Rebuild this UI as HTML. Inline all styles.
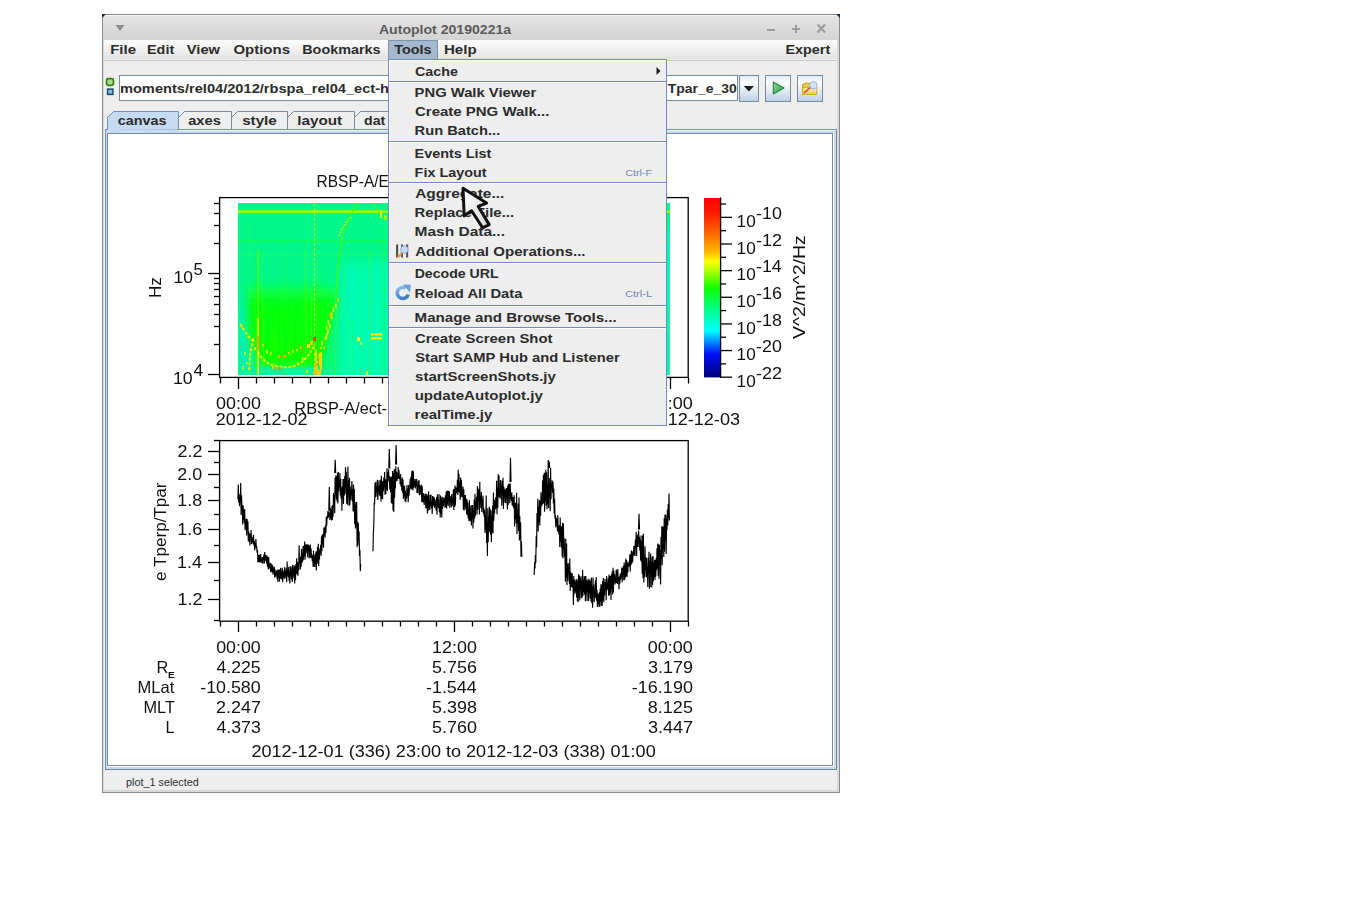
<!DOCTYPE html>
<html><head><meta charset="utf-8"><title>Autoplot 20190221a</title>
<style>
html,body{margin:0;padding:0;background:#ffffff;width:1345px;height:916px;overflow:hidden}
svg{display:block;position:absolute;left:0;top:0}
text{font-family:"Liberation Sans",sans-serif;white-space:pre}
</style></head><body>
<svg width="1345" height="916" viewBox="0 0 1345 916">
<defs>
<linearGradient id="gTitle" x1="0" y1="0" x2="0" y2="1"><stop offset="0" stop-color="#e4e4e4"/><stop offset="1" stop-color="#d3d3d3"/></linearGradient>
<linearGradient id="gMenu" x1="0" y1="0" x2="0" y2="1"><stop offset="0" stop-color="#fdfdfd"/><stop offset="1" stop-color="#e3e3e3"/></linearGradient>
<linearGradient id="gBtn" x1="0" y1="0" x2="0" y2="1"><stop offset="0" stop-color="#dfe9f4"/><stop offset="0.28" stop-color="#ffffff"/><stop offset="1" stop-color="#bccfe4"/></linearGradient>
<linearGradient id="gCbar" x1="0" y1="0" x2="0" y2="1">
<stop offset="0" stop-color="#ff0000"/><stop offset="0.08" stop-color="#ff1800"/><stop offset="0.21" stop-color="#ff7000"/>
<stop offset="0.30" stop-color="#ffb800"/><stop offset="0.355" stop-color="#ffff00"/><stop offset="0.41" stop-color="#a8ff00"/><stop offset="0.50" stop-color="#10ff00"/>
<stop offset="0.62" stop-color="#00ff88"/><stop offset="0.74" stop-color="#00ffff"/><stop offset="0.80" stop-color="#0090ff"/><stop offset="0.87" stop-color="#0010f8"/>
<stop offset="1" stop-color="#000078"/></linearGradient>
<linearGradient id="gCursor" x1="0" y1="0" x2="1" y2="1"><stop offset="0" stop-color="#ffffff"/><stop offset="1" stop-color="#d8d8d8"/></linearGradient>
<clipPath id="cSpec"><rect x="238" y="203" width="432" height="172"/></clipPath>
<clipPath id="cField"><rect x="120" y="76" width="617" height="24"/></clipPath>
<filter id="blur3" x="-50%" y="-50%" width="200%" height="200%"><feGaussianBlur stdDeviation="3"/></filter>
<filter id="blur6" x="-50%" y="-50%" width="200%" height="200%"><feGaussianBlur stdDeviation="6"/></filter>
<filter id="blur1" x="-50%" y="-50%" width="200%" height="200%"><feGaussianBlur stdDeviation="0.6"/></filter>
</defs>

<rect x="102" y="14" width="738" height="779" fill="#8c8c8c" />
<rect x="103" y="15" width="736" height="777" fill="#d9d9d9" />
<rect x="103" y="15" width="736" height="1" fill="#f4f4f4" />
<rect x="103" y="16" width="736" height="24" fill="url(#gTitle)" />
<path d="M102,14 L106,14 L102,18 Z" fill="#1a2a4a"/><path d="M840,14 L836,14 L840,18 Z" fill="#1a2a4a"/>
<text x="378.95" y="34" font-size="13.5" font-weight="bold" fill="#5a5a5a" textLength="132.25" lengthAdjust="spacingAndGlyphs" >Autoplot 20190221a</text>
<path d="M115.5,25 L124.5,25 L120,31 Z" fill="#8e8e8e"/>
<rect x="767" y="29" width="8" height="2" fill="#9c9c9c" />
<rect x="792" y="28" width="8" height="2" fill="#9c9c9c" />
<rect x="795" y="25" width="2" height="8" fill="#9c9c9c" />
<path d="M817.5,24.5 L825,32.5 M825,24.5 L817.5,32.5" stroke="#9c9c9c" stroke-width="2.2"/>
<rect x="104" y="40" width="733" height="19" fill="url(#gMenu)" />
<rect x="104" y="59" width="733" height="1" fill="#eeeeee" />
<rect x="104" y="60" width="733" height="1" fill="#c9c9c9" />
<rect x="104" y="61" width="733" height="729" fill="#eeeeee" />
<text x="110.19" y="54" font-size="12.5" font-weight="bold" fill="#2b2b2b" textLength="25.80" lengthAdjust="spacingAndGlyphs" >File</text>
<text x="147.03" y="54" font-size="12.5" font-weight="bold" fill="#2b2b2b" textLength="27.17" lengthAdjust="spacingAndGlyphs" >Edit</text>
<text x="186.89" y="54" font-size="12.5" font-weight="bold" fill="#2b2b2b" textLength="33.09" lengthAdjust="spacingAndGlyphs" >View</text>
<text x="233.40" y="54" font-size="12.5" font-weight="bold" fill="#2b2b2b" textLength="56.60" lengthAdjust="spacingAndGlyphs" >Options</text>
<text x="302.23" y="54" font-size="12.5" font-weight="bold" fill="#2b2b2b" textLength="78.37" lengthAdjust="spacingAndGlyphs" >Bookmarks</text>
<text x="443.98" y="54" font-size="12.5" font-weight="bold" fill="#2b2b2b" textLength="32.65" lengthAdjust="spacingAndGlyphs" >Help</text>
<rect x="388" y="40" width="50" height="19" fill="#a4b9cf" />
<rect x="388.5" y="40.5" width="49" height="19" fill="none" stroke="#8094ab"/>
<text x="394.16" y="54" font-size="12.5" font-weight="bold" fill="#2b2b2b" textLength="37.46" lengthAdjust="spacingAndGlyphs" >Tools</text>
<text x="785.53" y="54" font-size="12.5" font-weight="bold" fill="#2b2b2b" textLength="44.65" lengthAdjust="spacingAndGlyphs" >Expert</text>
<rect x="106.6" y="78.6" width="6.8" height="6.8" rx="1.6" fill="#a4dd84" stroke="#3d7c0e" stroke-width="1.7"/>
<rect x="107.6" y="89.1" width="5.3" height="5.3" fill="#88b8da" stroke="#14506e" stroke-width="1.5"/>
<rect x="119" y="75" width="619" height="26" fill="#7b8a99" />
<rect x="120" y="76" width="617" height="24" fill="#ffffff" />
<g clip-path="url(#cField)">
<text x="119.95" y="93" font-size="12.5" font-weight="bold" fill="#2b2b2b" textLength="438.14" lengthAdjust="spacingAndGlyphs" >moments/rel04/2012/rbspa_rel04_ect-hope-MOM-L3_Tpar_e_30</text>
</g>
<rect x="580" y="76" width="157" height="24" fill="#ffffff" />
<text x="667.76" y="93" font-size="12.5" font-weight="bold" fill="#2b2b2b" textLength="69.00" lengthAdjust="spacingAndGlyphs" >Tpar_e_30</text>
<rect x="739.5" y="75.5" width="19" height="26" fill="url(#gBtn)" stroke="#7b8a99"/>
<path d="M743.8,86 L754,86 L748.9,91.5 Z" fill="#1e1e1e"/>
<rect x="765.5" y="75.5" width="25" height="26" fill="url(#gBtn)" stroke="#7b8a99"/>
<defs><linearGradient id="gPlay" x1="0" y1="0" x2="1" y2="1"><stop offset="0" stop-color="#8ad89a"/><stop offset="1" stop-color="#2e9e4a"/></linearGradient><linearGradient id="gFold" x1="0" y1="0" x2="0" y2="1"><stop offset="0" stop-color="#fff0a8"/><stop offset="1" stop-color="#f2cc50"/></linearGradient></defs>
<path d="M773.3,82 L784,88 L773.3,94 Z" fill="url(#gPlay)" stroke="#1f8a40" stroke-width="1.1" stroke-linejoin="round"/>
<rect x="797.5" y="75.5" width="25" height="26" fill="url(#gBtn)" stroke="#7b8a99"/>
<path d="M802.5,84.5 L806,83 L809.5,83 L810.5,84.5 L816.5,84.5 L816.5,94.5 L802.5,94.5 Z" fill="#e9c450" stroke="#c9a21e" stroke-width="1"/>
<path d="M803,87.5 L817,87.5 L816.5,94.5 L802.5,94.5 Z" fill="url(#gFold)" stroke="#d0a828" stroke-width="0.8"/>
<path d="M804,93 L810.8,87" stroke="#e8602a" stroke-width="1.7"/>
<circle cx="813.4" cy="85.3" r="3.7" fill="#cce4ff" stroke="#9cb2c8" stroke-width="1"/>
<rect x="105" y="129" width="732" height="641" fill="#6d8ec8" />
<rect x="836" y="129" width="1" height="641" fill="#70849a" />
<rect x="105" y="769" width="732" height="1" fill="#70849a" />
<rect x="106" y="130" width="730" height="639" fill="#c6dbf2" />
<rect x="106" y="130" width="730" height="1" fill="#f4f8fc" />
<rect x="107" y="133" width="727" height="634" fill="#ffffff" />
<rect x="107" y="133" width="726" height="633" fill="#7b8a99" />
<rect x="108" y="134" width="724" height="631" fill="#ffffff" />
<rect x="837" y="129" width="2" height="641" fill="#d9d9d9" />
<path d="M231.5,130 L231.5,117.5 L237.5,111.5 L287.5,111.5 L287.5,129.5" fill="#eeeeee" stroke="#7b8a99" stroke-width="1"/>
<path d="M287.5,130 L287.5,117.5 L293.5,111.5 L354.5,111.5 L354.5,129.5" fill="#eeeeee" stroke="#7b8a99" stroke-width="1"/>
<path d="M354.5,130 L354.5,117.5 L360.5,111.5 L419.5,111.5 L419.5,129.5" fill="#eeeeee" stroke="#7b8a99" stroke-width="1"/>
<path d="M178.5,130 L178.5,117.5 L184.5,111.5 L231.5,111.5 L231.5,129.5" fill="#eeeeee" stroke="#7b8a99" stroke-width="1"/>
<path d="M107.5,130 L107.5,117.5 L113.5,111.5 L178.5,111.5 L178.5,129.5" fill="#c6dbf2" stroke="#6d8ec8" stroke-width="1"/>
<line x1="178" y1="129.5" x2="837" y2="129.5" stroke="#6d8ec8" stroke-width="1" />
<rect x="106" y="130" width="730" height="3" fill="#c6dbf2" />
<rect x="179" y="130" width="657" height="1" fill="#f4f8fc" />
<rect x="107" y="133" width="726" height="1" fill="#7b8a99" />
<text x="117.82" y="125" font-size="12.5" font-weight="bold" fill="#2b2b2b" textLength="48.78" lengthAdjust="spacingAndGlyphs" >canvas</text>
<text x="188.16" y="125" font-size="12.5" font-weight="bold" fill="#2b2b2b" textLength="32.66" lengthAdjust="spacingAndGlyphs" >axes</text>
<text x="242.17" y="125" font-size="12.5" font-weight="bold" fill="#2b2b2b" textLength="34.55" lengthAdjust="spacingAndGlyphs" >style</text>
<text x="297.23" y="125" font-size="12.5" font-weight="bold" fill="#2b2b2b" textLength="44.96" lengthAdjust="spacingAndGlyphs" >layout</text>
<text x="364.13" y="125" font-size="12.5" font-weight="bold" fill="#2b2b2b" textLength="21.19" lengthAdjust="spacingAndGlyphs" >dat</text>
<text x="126.00" y="786" font-size="10.5" font-weight="normal" fill="#2e2e2e" textLength="72.80" lengthAdjust="spacingAndGlyphs" >plot_1 selected</text>
<rect x="104" y="790" width="733" height="1" fill="#d6d6d6" />
<g style="will-change:transform">
<g clip-path="url(#cSpec)">
<rect x="238" y="203" width="432" height="172" fill="#00f88a" />
<g filter="url(#blur6)">
<rect x="340" y="262" width="60" height="120" fill="#00fcbc" opacity="0.8"/>
<rect x="645" y="230" width="40" height="150" fill="#00fcb4"/>
<path d="M232,300 L244,305 L252,375 L232,375 Z" fill="#00f2b4"/>
</g>
<defs><linearGradient id="gBowl" x1="0" y1="0" x2="0" y2="1"><stop offset="0" stop-color="#00ff60" stop-opacity="0"/><stop offset="0.15" stop-color="#10ff30" stop-opacity="0.75"/><stop offset="0.3" stop-color="#00ff10"/><stop offset="1" stop-color="#00ff00"/></linearGradient></defs>
<g filter="url(#blur3)">
<path d="M247,278 L337,278 L336,302 C332,325 326,348 320,364 C305,367 285,367 266,366 C258,358 252,345 249,332 Z" fill="url(#gBowl)"/>
</g>
<rect x="238" y="367" width="76" height="8" fill="#00f4a4" opacity="0.8" filter="url(#blur1)"/>
<line x1="507.1" y1="292" x2="507.1" y2="375" stroke="#20ff30" stroke-width="0.7" opacity="0.54"/>
<line x1="573.2" y1="233" x2="573.2" y2="375" stroke="#20ff30" stroke-width="0.7" opacity="0.57"/>
<line x1="286.9" y1="259" x2="286.9" y2="375" stroke="#40ff20" stroke-width="0.7" opacity="0.38"/>
<line x1="282.1" y1="233" x2="282.1" y2="375" stroke="#40ff20" stroke-width="0.7" opacity="0.39"/>
<line x1="316.7" y1="307" x2="316.7" y2="375" stroke="#60ff10" stroke-width="0.7" opacity="0.31"/>
<line x1="582.4" y1="220" x2="582.4" y2="375" stroke="#60ff10" stroke-width="0.7" opacity="0.29"/>
<line x1="238.8" y1="308" x2="238.8" y2="375" stroke="#40ff20" stroke-width="0.7" opacity="0.52"/>
<line x1="652.8" y1="223" x2="652.8" y2="375" stroke="#40ff20" stroke-width="0.7" opacity="0.35"/>
<line x1="653.4" y1="268" x2="653.4" y2="375" stroke="#40ff20" stroke-width="0.7" opacity="0.31"/>
<line x1="656.4" y1="227" x2="656.4" y2="375" stroke="#60ff10" stroke-width="0.7" opacity="0.35"/>
<line x1="394.0" y1="223" x2="394.0" y2="375" stroke="#40ff20" stroke-width="0.7" opacity="0.34"/>
<line x1="381.4" y1="301" x2="381.4" y2="375" stroke="#20ff30" stroke-width="0.7" opacity="0.46"/>
<line x1="543.7" y1="211" x2="543.7" y2="375" stroke="#00ff50" stroke-width="0.7" opacity="0.54"/>
<line x1="445.7" y1="241" x2="445.7" y2="375" stroke="#60ff10" stroke-width="0.7" opacity="0.42"/>
<line x1="314.1" y1="234" x2="314.1" y2="375" stroke="#20ff30" stroke-width="0.7" opacity="0.58"/>
<line x1="392.5" y1="252" x2="392.5" y2="375" stroke="#60ff10" stroke-width="0.7" opacity="0.38"/>
<line x1="487.9" y1="204" x2="487.9" y2="375" stroke="#20ff30" stroke-width="0.7" opacity="0.50"/>
<line x1="507.4" y1="318" x2="507.4" y2="375" stroke="#20ff30" stroke-width="0.7" opacity="0.51"/>
<line x1="639.6" y1="316" x2="639.6" y2="375" stroke="#00ff50" stroke-width="0.7" opacity="0.43"/>
<line x1="623.7" y1="233" x2="623.7" y2="375" stroke="#60ff10" stroke-width="0.7" opacity="0.29"/>
<line x1="561.3" y1="299" x2="561.3" y2="375" stroke="#00ff50" stroke-width="0.7" opacity="0.26"/>
<line x1="646.6" y1="214" x2="646.6" y2="375" stroke="#00ff50" stroke-width="0.7" opacity="0.43"/>
<line x1="394.7" y1="221" x2="394.7" y2="375" stroke="#00ff50" stroke-width="0.7" opacity="0.57"/>
<line x1="473.5" y1="240" x2="473.5" y2="375" stroke="#00ff50" stroke-width="0.7" opacity="0.36"/>
<line x1="583.1" y1="278" x2="583.1" y2="375" stroke="#00ff50" stroke-width="0.7" opacity="0.60"/>
<line x1="307.8" y1="209" x2="307.8" y2="375" stroke="#60ff10" stroke-width="0.7" opacity="0.26"/>
<line x1="557.9" y1="244" x2="557.9" y2="375" stroke="#00ff50" stroke-width="0.7" opacity="0.41"/>
<line x1="420.2" y1="210" x2="420.2" y2="375" stroke="#20ff30" stroke-width="0.7" opacity="0.53"/>
<line x1="382.4" y1="228" x2="382.4" y2="375" stroke="#40ff20" stroke-width="0.7" opacity="0.47"/>
<line x1="578.4" y1="216" x2="578.4" y2="375" stroke="#60ff10" stroke-width="0.7" opacity="0.38"/>
<line x1="263.4" y1="253" x2="263.4" y2="375" stroke="#40ff20" stroke-width="0.7" opacity="0.41"/>
<line x1="669.7" y1="305" x2="669.7" y2="375" stroke="#60ff10" stroke-width="0.7" opacity="0.59"/>
<line x1="535.6" y1="241" x2="535.6" y2="375" stroke="#00ff50" stroke-width="0.7" opacity="0.35"/>
<line x1="412.4" y1="221" x2="412.4" y2="375" stroke="#60ff10" stroke-width="0.7" opacity="0.54"/>
<line x1="467.7" y1="225" x2="467.7" y2="375" stroke="#60ff10" stroke-width="0.7" opacity="0.55"/>
<line x1="315.8" y1="262" x2="315.8" y2="375" stroke="#00ff50" stroke-width="0.7" opacity="0.27"/>
<line x1="581.5" y1="246" x2="581.5" y2="375" stroke="#20ff30" stroke-width="0.7" opacity="0.52"/>
<line x1="395.0" y1="288" x2="395.0" y2="375" stroke="#00ff50" stroke-width="0.7" opacity="0.54"/>
<line x1="352.4" y1="321" x2="352.4" y2="375" stroke="#00ff50" stroke-width="0.7" opacity="0.58"/>
<line x1="384.9" y1="224" x2="384.9" y2="375" stroke="#20ff30" stroke-width="0.7" opacity="0.42"/>
<line x1="572.2" y1="242" x2="572.2" y2="375" stroke="#00ff50" stroke-width="0.7" opacity="0.41"/>
<line x1="590.8" y1="281" x2="590.8" y2="375" stroke="#00ff50" stroke-width="0.7" opacity="0.37"/>
<line x1="516.2" y1="292" x2="516.2" y2="375" stroke="#60ff10" stroke-width="0.7" opacity="0.37"/>
<line x1="602.1" y1="307" x2="602.1" y2="375" stroke="#60ff10" stroke-width="0.7" opacity="0.59"/>
<line x1="651.2" y1="265" x2="651.2" y2="375" stroke="#40ff20" stroke-width="0.7" opacity="0.32"/>
<line x1="394.4" y1="305" x2="394.4" y2="375" stroke="#00ff50" stroke-width="0.7" opacity="0.49"/>
<line x1="548.9" y1="291" x2="548.9" y2="375" stroke="#40ff20" stroke-width="0.7" opacity="0.47"/>
<line x1="642.4" y1="265" x2="642.4" y2="375" stroke="#60ff10" stroke-width="0.7" opacity="0.36"/>
<line x1="477.0" y1="307" x2="477.0" y2="375" stroke="#00ff50" stroke-width="0.7" opacity="0.50"/>
<line x1="249.9" y1="222" x2="249.9" y2="375" stroke="#60ff10" stroke-width="0.7" opacity="0.47"/>
<line x1="316.1" y1="294" x2="316.1" y2="375" stroke="#40ff20" stroke-width="0.7" opacity="0.47"/>
<line x1="256.1" y1="260" x2="256.1" y2="375" stroke="#40ff20" stroke-width="0.7" opacity="0.31"/>
<line x1="623.3" y1="216" x2="623.3" y2="375" stroke="#40ff20" stroke-width="0.7" opacity="0.42"/>
<line x1="474.9" y1="253" x2="474.9" y2="375" stroke="#00ff50" stroke-width="0.7" opacity="0.38"/>
<line x1="502.3" y1="274" x2="502.3" y2="375" stroke="#40ff20" stroke-width="0.7" opacity="0.50"/>
<line x1="399.6" y1="245" x2="399.6" y2="375" stroke="#00ff50" stroke-width="0.7" opacity="0.55"/>
<line x1="612.3" y1="286" x2="612.3" y2="375" stroke="#00ff50" stroke-width="0.7" opacity="0.59"/>
<line x1="475.6" y1="239" x2="475.6" y2="375" stroke="#00ff50" stroke-width="0.7" opacity="0.44"/>
<line x1="384.6" y1="273" x2="384.6" y2="375" stroke="#00ff50" stroke-width="0.7" opacity="0.54"/>
<line x1="419.1" y1="301" x2="419.1" y2="375" stroke="#00ff50" stroke-width="0.7" opacity="0.41"/>
<line x1="305.7" y1="249" x2="305.7" y2="375" stroke="#60ff10" stroke-width="0.7" opacity="0.59"/>
<line x1="656.2" y1="276" x2="656.2" y2="375" stroke="#00ff50" stroke-width="0.7" opacity="0.54"/>
<line x1="523.8" y1="249" x2="523.8" y2="375" stroke="#00ff50" stroke-width="0.7" opacity="0.45"/>
<line x1="503.8" y1="220" x2="503.8" y2="375" stroke="#60ff10" stroke-width="0.7" opacity="0.40"/>
<line x1="659.9" y1="262" x2="659.9" y2="375" stroke="#60ff10" stroke-width="0.7" opacity="0.59"/>
<line x1="402.1" y1="318" x2="402.1" y2="375" stroke="#40ff20" stroke-width="0.7" opacity="0.46"/>
<line x1="350.2" y1="321" x2="350.2" y2="375" stroke="#60ff10" stroke-width="0.7" opacity="0.34"/>
<line x1="246.5" y1="316" x2="246.5" y2="375" stroke="#00ff50" stroke-width="0.7" opacity="0.42"/>
<line x1="361.7" y1="260" x2="361.7" y2="375" stroke="#20ff30" stroke-width="0.7" opacity="0.48"/>
<line x1="653.1" y1="232" x2="653.1" y2="375" stroke="#20ff30" stroke-width="0.7" opacity="0.52"/>
<line x1="318.1" y1="281" x2="318.1" y2="368" stroke="#30ff00" stroke-width="0.8" opacity="0.51"/>
<line x1="273.9" y1="336" x2="273.9" y2="368" stroke="#30ff00" stroke-width="0.8" opacity="0.61"/>
<line x1="271.7" y1="296" x2="271.7" y2="368" stroke="#30ff00" stroke-width="0.8" opacity="0.36"/>
<line x1="331.1" y1="298" x2="331.1" y2="368" stroke="#30ff00" stroke-width="0.8" opacity="0.54"/>
<line x1="290.0" y1="319" x2="290.0" y2="368" stroke="#30ff00" stroke-width="0.8" opacity="0.54"/>
<line x1="311.5" y1="287" x2="311.5" y2="368" stroke="#30ff00" stroke-width="0.8" opacity="0.60"/>
<line x1="276.1" y1="312" x2="276.1" y2="368" stroke="#30ff00" stroke-width="0.8" opacity="0.43"/>
<line x1="275.7" y1="312" x2="275.7" y2="368" stroke="#30ff00" stroke-width="0.8" opacity="0.49"/>
<line x1="280.9" y1="325" x2="280.9" y2="368" stroke="#30ff00" stroke-width="0.8" opacity="0.54"/>
<line x1="254.9" y1="295" x2="254.9" y2="368" stroke="#30ff00" stroke-width="0.8" opacity="0.48"/>
<line x1="325.3" y1="333" x2="325.3" y2="368" stroke="#30ff00" stroke-width="0.8" opacity="0.52"/>
<line x1="253.2" y1="327" x2="253.2" y2="368" stroke="#30ff00" stroke-width="0.8" opacity="0.47"/>
<line x1="298.1" y1="322" x2="298.1" y2="368" stroke="#30ff00" stroke-width="0.8" opacity="0.55"/>
<line x1="290.6" y1="335" x2="290.6" y2="368" stroke="#30ff00" stroke-width="0.8" opacity="0.45"/>
<line x1="283.3" y1="331" x2="283.3" y2="368" stroke="#30ff00" stroke-width="0.8" opacity="0.38"/>
<line x1="275.7" y1="330" x2="275.7" y2="368" stroke="#30ff00" stroke-width="0.8" opacity="0.33"/>
<line x1="318.9" y1="322" x2="318.9" y2="368" stroke="#30ff00" stroke-width="0.8" opacity="0.47"/>
<line x1="274.9" y1="327" x2="274.9" y2="368" stroke="#30ff00" stroke-width="0.8" opacity="0.66"/>
<line x1="263.4" y1="309" x2="263.4" y2="368" stroke="#30ff00" stroke-width="0.8" opacity="0.52"/>
<line x1="291.8" y1="300" x2="291.8" y2="368" stroke="#30ff00" stroke-width="0.8" opacity="0.36"/>
<line x1="298.9" y1="329" x2="298.9" y2="368" stroke="#30ff00" stroke-width="0.8" opacity="0.33"/>
<line x1="270.4" y1="329" x2="270.4" y2="368" stroke="#30ff00" stroke-width="0.8" opacity="0.62"/>
<line x1="305.1" y1="282" x2="305.1" y2="368" stroke="#30ff00" stroke-width="0.8" opacity="0.59"/>
<line x1="330.3" y1="340" x2="330.3" y2="368" stroke="#30ff00" stroke-width="0.8" opacity="0.58"/>
<line x1="255.9" y1="331" x2="255.9" y2="368" stroke="#30ff00" stroke-width="0.8" opacity="0.39"/>
<line x1="303.7" y1="337" x2="303.7" y2="368" stroke="#30ff00" stroke-width="0.8" opacity="0.58"/>
<line x1="262.8" y1="298" x2="262.8" y2="368" stroke="#30ff00" stroke-width="0.8" opacity="0.67"/>
<line x1="264.0" y1="317" x2="264.0" y2="368" stroke="#30ff00" stroke-width="0.8" opacity="0.47"/>
<line x1="264.9" y1="317" x2="264.9" y2="368" stroke="#30ff00" stroke-width="0.8" opacity="0.32"/>
<line x1="260.7" y1="303" x2="260.7" y2="368" stroke="#30ff00" stroke-width="0.8" opacity="0.33"/>
<line x1="256.6" y1="315" x2="256.6" y2="368" stroke="#30ff00" stroke-width="0.8" opacity="0.60"/>
<line x1="322.3" y1="288" x2="322.3" y2="368" stroke="#30ff00" stroke-width="0.8" opacity="0.47"/>
<line x1="277.2" y1="316" x2="277.2" y2="368" stroke="#30ff00" stroke-width="0.8" opacity="0.50"/>
<line x1="327.1" y1="302" x2="327.1" y2="368" stroke="#30ff00" stroke-width="0.8" opacity="0.32"/>
<line x1="307.8" y1="289" x2="307.8" y2="368" stroke="#30ff00" stroke-width="0.8" opacity="0.55"/>
<line x1="292.5" y1="335" x2="292.5" y2="368" stroke="#30ff00" stroke-width="0.8" opacity="0.52"/>
<line x1="301.7" y1="296" x2="301.7" y2="368" stroke="#30ff00" stroke-width="0.8" opacity="0.52"/>
<line x1="272.3" y1="325" x2="272.3" y2="368" stroke="#30ff00" stroke-width="0.8" opacity="0.51"/>
<line x1="262.7" y1="294" x2="262.7" y2="368" stroke="#30ff00" stroke-width="0.8" opacity="0.45"/>
<line x1="310.9" y1="291" x2="310.9" y2="368" stroke="#30ff00" stroke-width="0.8" opacity="0.59"/>
<rect x="238" y="210.3" width="432" height="2.6" fill="#a0ff00" />
<rect x="238" y="240.6" width="432" height="1.5" fill="#18ff40" opacity="0.8"/>
<rect x="238" y="254" width="432" height="1.2" fill="#30ff60" opacity="0.5"/>
<line x1="258.2" y1="250" x2="258.2" y2="375" stroke="#50ff00" stroke-width="1.3"/>
<line x1="258.2" y1="318" x2="258.2" y2="375" stroke="#f0f000" stroke-width="1.6"/>
<line x1="258.2" y1="336" x2="258.2" y2="350" stroke="#ffa000" stroke-width="2"/>
<line x1="314.6" y1="203" x2="314.6" y2="375" stroke="#c0ff00" stroke-width="0.9" stroke-dasharray="3,2"/>
<line x1="336.5" y1="300" x2="335.5" y2="375" stroke="#40ff20" stroke-width="0.9"/>
<line x1="370" y1="250" x2="370" y2="375" stroke="#40ff30" stroke-width="0.9" opacity="0.7"/>
<path d="M336,300 C338,262 340,240 346,226 C350,216 354,208 357,203" fill="none" stroke="#40ff00" stroke-width="1.2"/>
<path d="M339,236 C342,228 346,222 352,216" fill="none" stroke="#b0ff00" stroke-width="2" stroke-dasharray="1.5,1.5"/>
<path d="M373,203 C376,208 379,213 383,219" fill="none" stroke="#50ff00" stroke-width="1"/>
<rect x="380" y="213" width="2" height="5" fill="#e0ff00" />
<rect x="384" y="215" width="3" height="5" fill="#a0ff00" />
<path d="M240,324 L248,336 L253,341 L250,356 L249,372" fill="none" stroke="#e0f000" stroke-width="2.2" stroke-dasharray="3,1.8"/>
<path d="M258,352 C262,360 268,365 280,367 C290,368 298,366 304,360 C308,356 311,352 314,346" fill="none" stroke="#e8f000" stroke-width="2.2" stroke-dasharray="3,1.5"/>
<rect x="266" y="350" width="1.5" height="3.3" fill="#f0f000"/>
<rect x="270" y="352" width="1.5" height="3.1" fill="#f0f000"/>
<rect x="288" y="352" width="1.5" height="2.2" fill="#f0f000"/>
<rect x="292" y="350" width="1.5" height="3.0" fill="#ffd000"/>
<rect x="296" y="349" width="1.5" height="2.5" fill="#ffd000"/>
<rect x="300" y="346" width="1.5" height="3.0" fill="#ffd000"/>
<rect x="262" y="344" width="1.5" height="2.2" fill="#d8ff00"/>
<rect x="246" y="362" width="1.5" height="2.1" fill="#d8ff00"/>
<rect x="244" y="352" width="1.5" height="2.8" fill="#f0f000"/>
<rect x="242" y="366" width="1.5" height="3.9" fill="#ffd000"/>
<rect x="302" y="357" width="1.5" height="3.4" fill="#f0f000"/>
<rect x="297" y="362" width="1.5" height="3.5" fill="#f0f000"/>
<rect x="314.4" y="375.7" width="1.6" height="2.4" fill="#ffe000"/>
<rect x="313.6" y="371.4" width="1.6" height="2.9" fill="#ffe000"/>
<rect x="316.1" y="369.8" width="1.6" height="3.1" fill="#ffc000"/>
<rect x="316.0" y="365.4" width="1.6" height="4.4" fill="#d8ff00"/>
<rect x="315.5" y="364.4" width="1.6" height="3.8" fill="#f0f000"/>
<rect x="317.2" y="361.0" width="1.6" height="2.2" fill="#ffc000"/>
<rect x="315.4" y="355.7" width="1.6" height="2.1" fill="#ffe000"/>
<rect x="320.7" y="353.9" width="1.6" height="2.0" fill="#d8ff00"/>
<rect x="319.5" y="352.6" width="1.6" height="3.0" fill="#ffc000"/>
<rect x="320.4" y="346.8" width="1.6" height="2.2" fill="#ffe000"/>
<rect x="323.4" y="346.5" width="1.6" height="2.5" fill="#ffc000"/>
<rect x="321.3" y="341.1" width="1.6" height="4.3" fill="#ffe000"/>
<rect x="324.4" y="337.1" width="1.6" height="3.0" fill="#f0f000"/>
<rect x="325.7" y="335.3" width="1.6" height="4.1" fill="#f0f000"/>
<rect x="326.3" y="332.9" width="1.6" height="2.4" fill="#ffe000"/>
<rect x="327.2" y="329.2" width="1.6" height="4.2" fill="#ffe000"/>
<rect x="325.7" y="325.8" width="1.6" height="3.7" fill="#f0f000"/>
<rect x="329.1" y="324.5" width="1.6" height="4.0" fill="#d8ff00"/>
<rect x="327.7" y="320.4" width="1.6" height="4.2" fill="#f0f000"/>
<rect x="331.3" y="316.7" width="1.6" height="2.5" fill="#ffe000"/>
<rect x="329.7" y="313.2" width="1.6" height="4.2" fill="#ffc000"/>
<rect x="331.0" y="311.8" width="1.6" height="4.3" fill="#ffc000"/>
<rect x="332.7" y="307.2" width="1.6" height="4.8" fill="#d8ff00"/>
<rect x="335.2" y="304.9" width="1.6" height="2.3" fill="#ffc000"/>
<rect x="334.9" y="303.7" width="1.6" height="3.5" fill="#f0f000"/>
<rect x="337.4" y="298.2" width="1.6" height="3.3" fill="#ffc000"/>
<rect x="319.1" y="371.9" width="1.5" height="7.8" fill="#ffd800"/>
<rect x="315.6" y="367.4" width="1.5" height="6.2" fill="#ffd800"/>
<rect x="315.5" y="355.8" width="1.5" height="7.6" fill="#ffd800"/>
<rect x="320.3" y="352.2" width="1.5" height="7.9" fill="#ffd800"/>
<rect x="315.3" y="351.9" width="1.5" height="6.7" fill="#ffd800"/>
<rect x="319.0" y="361.0" width="1.5" height="4.8" fill="#ffd800"/>
<rect x="317.4" y="369.2" width="1.5" height="5.6" fill="#ffd800"/>
<rect x="315.1" y="350.3" width="1.5" height="6.8" fill="#ffd800"/>
<rect x="319.5" y="372.3" width="1.5" height="8.0" fill="#ffd800"/>
<rect x="318.4" y="353.5" width="1.5" height="5.4" fill="#ffd800"/>
<rect x="320.2" y="356.6" width="1.5" height="5.0" fill="#ffd800"/>
<rect x="315.1" y="363.4" width="1.5" height="5.4" fill="#ffd800"/>
<rect x="319.6" y="370.0" width="1.5" height="7.8" fill="#ffd800"/>
<rect x="319.3" y="356.9" width="1.5" height="5.5" fill="#ffd800"/>
<rect x="241" y="324" width="1.5" height="4" fill="#ffd000" />
<rect x="252" y="338" width="2" height="4" fill="#f0f000" />
<rect x="254" y="347" width="2" height="3" fill="#e0f000" />
<rect x="278" y="355" width="2" height="3" fill="#ffb000" />
<rect x="281" y="355" width="2" height="3" fill="#ff9000" />
<rect x="284" y="355" width="2" height="3" fill="#ffb000" />
<rect x="275" y="367" width="2" height="3" fill="#ff9000" />
<rect x="279" y="367" width="2" height="3" fill="#ff8000" />
<rect x="272" y="366" width="1.5" height="3" fill="#ffd000" />
<rect x="313.5" y="337" width="2.5" height="4" fill="#ff3000" />
<rect x="310" y="341" width="3" height="4" fill="#ffd000" />
<rect x="307" y="344" width="3" height="4" fill="#ffe000" />
<rect x="301" y="347" width="1.5" height="3" fill="#ff9000" />
<rect x="371" y="333" width="11" height="2.5" fill="#ffe800" />
<rect x="371" y="337" width="11" height="2.5" fill="#f0ff00" />
<rect x="357" y="337" width="3" height="4" fill="#e8ff00" />
<rect x="360" y="342" width="2" height="3" fill="#d0ff00" />
<rect x="314" y="363" width="3" height="12" fill="#ffc000" />
<rect x="320" y="360" width="2" height="10" fill="#ffd000" />
<rect x="366" y="371" width="2" height="4" fill="#e0ff00" />
<rect x="306" y="370" width="2" height="3" fill="#c0ff00" />
</g>
<rect x="219.6" y="197.6" width="468.6" height="179.8" fill="none" stroke="#000" stroke-width="1.3"/>
<line x1="220.5" y1="378" x2="220.5" y2="383.5" stroke="#000" stroke-width="1.3" />
<line x1="238.5" y1="378" x2="238.5" y2="389" stroke="#000" stroke-width="1.3" />
<line x1="256.5" y1="378" x2="256.5" y2="383.5" stroke="#000" stroke-width="1.3" />
<line x1="274.5" y1="378" x2="274.5" y2="383.5" stroke="#000" stroke-width="1.3" />
<line x1="292.5" y1="378" x2="292.5" y2="383.5" stroke="#000" stroke-width="1.3" />
<line x1="310.5" y1="378" x2="310.5" y2="383.5" stroke="#000" stroke-width="1.3" />
<line x1="328.5" y1="378" x2="328.5" y2="383.5" stroke="#000" stroke-width="1.3" />
<line x1="346.5" y1="378" x2="346.5" y2="383.5" stroke="#000" stroke-width="1.3" />
<line x1="364.5" y1="378" x2="364.5" y2="383.5" stroke="#000" stroke-width="1.3" />
<line x1="382.5" y1="378" x2="382.5" y2="383.5" stroke="#000" stroke-width="1.3" />
<line x1="400.5" y1="378" x2="400.5" y2="383.5" stroke="#000" stroke-width="1.3" />
<line x1="418.5" y1="378" x2="418.5" y2="383.5" stroke="#000" stroke-width="1.3" />
<line x1="436.5" y1="378" x2="436.5" y2="383.5" stroke="#000" stroke-width="1.3" />
<line x1="454.5" y1="378" x2="454.5" y2="389" stroke="#000" stroke-width="1.3" />
<line x1="472.5" y1="378" x2="472.5" y2="383.5" stroke="#000" stroke-width="1.3" />
<line x1="490.5" y1="378" x2="490.5" y2="383.5" stroke="#000" stroke-width="1.3" />
<line x1="508.5" y1="378" x2="508.5" y2="383.5" stroke="#000" stroke-width="1.3" />
<line x1="526.5" y1="378" x2="526.5" y2="383.5" stroke="#000" stroke-width="1.3" />
<line x1="544.5" y1="378" x2="544.5" y2="383.5" stroke="#000" stroke-width="1.3" />
<line x1="562.5" y1="378" x2="562.5" y2="383.5" stroke="#000" stroke-width="1.3" />
<line x1="580.5" y1="378" x2="580.5" y2="383.5" stroke="#000" stroke-width="1.3" />
<line x1="598.5" y1="378" x2="598.5" y2="383.5" stroke="#000" stroke-width="1.3" />
<line x1="616.5" y1="378" x2="616.5" y2="383.5" stroke="#000" stroke-width="1.3" />
<line x1="634.5" y1="378" x2="634.5" y2="383.5" stroke="#000" stroke-width="1.3" />
<line x1="652.5" y1="378" x2="652.5" y2="383.5" stroke="#000" stroke-width="1.3" />
<line x1="670.5" y1="378" x2="670.5" y2="389" stroke="#000" stroke-width="1.3" />
<line x1="688.5" y1="378" x2="688.5" y2="383.5" stroke="#000" stroke-width="1.3" />
<line x1="208" y1="374.5" x2="219.6" y2="374.5" stroke="#000" stroke-width="1.3" />
<line x1="214" y1="344.5" x2="219.6" y2="344.5" stroke="#000" stroke-width="1.3" />
<line x1="214" y1="326.5" x2="219.6" y2="326.5" stroke="#000" stroke-width="1.3" />
<line x1="214" y1="314.5" x2="219.6" y2="314.5" stroke="#000" stroke-width="1.3" />
<line x1="214" y1="304.5" x2="219.6" y2="304.5" stroke="#000" stroke-width="1.3" />
<line x1="214" y1="296.5" x2="219.6" y2="296.5" stroke="#000" stroke-width="1.3" />
<line x1="214" y1="289.5" x2="219.6" y2="289.5" stroke="#000" stroke-width="1.3" />
<line x1="214" y1="283.5" x2="219.6" y2="283.5" stroke="#000" stroke-width="1.3" />
<line x1="214" y1="278.5" x2="219.6" y2="278.5" stroke="#000" stroke-width="1.3" />
<line x1="208" y1="273.5" x2="219.6" y2="273.5" stroke="#000" stroke-width="1.3" />
<line x1="214" y1="243.5" x2="219.6" y2="243.5" stroke="#000" stroke-width="1.3" />
<line x1="214" y1="225.5" x2="219.6" y2="225.5" stroke="#000" stroke-width="1.3" />
<line x1="214" y1="213.5" x2="219.6" y2="213.5" stroke="#000" stroke-width="1.3" />
<line x1="214" y1="203.5" x2="219.6" y2="203.5" stroke="#000" stroke-width="1.3" />
<text x="172.97" y="384" font-size="16.5" font-weight="normal" fill="#111111" textLength="19.74" lengthAdjust="spacingAndGlyphs" >10</text>
<text x="193.61" y="376" font-size="16.5" font-weight="normal" fill="#111111" textLength="9.69" lengthAdjust="spacingAndGlyphs" >4</text>
<text x="173.49" y="283" font-size="16.5" font-weight="normal" fill="#111111" textLength="19.40" lengthAdjust="spacingAndGlyphs" >10</text>
<text x="193.53" y="275" font-size="16.5" font-weight="normal" fill="#111111" textLength="9.37" lengthAdjust="spacingAndGlyphs" >5</text>
<text transform="rotate(-90)" x="-297.90" y="161" font-size="16.5" font-weight="normal" fill="#111" textLength="20.74" lengthAdjust="spacingAndGlyphs">Hz</text>
<text x="316.52" y="187" font-size="16.5" font-weight="normal" fill="#111111" textLength="124.10" lengthAdjust="spacingAndGlyphs" >RBSP-A/EMFISIS</text>
<text x="215.98" y="409" font-size="16.5" font-weight="normal" fill="#111111" textLength="44.89" lengthAdjust="spacingAndGlyphs" >00:00</text>
<text x="215.70" y="425" font-size="16.5" font-weight="normal" fill="#111111" textLength="91.90" lengthAdjust="spacingAndGlyphs" >2012-12-02</text>
<text x="647.88" y="409" font-size="16.5" font-weight="normal" fill="#111111" textLength="44.99" lengthAdjust="spacingAndGlyphs" >00:00</text>
<text x="647.60" y="425" font-size="16.5" font-weight="normal" fill="#111111" textLength="92.38" lengthAdjust="spacingAndGlyphs" >2012-12-03</text>
<text x="294.35" y="414" font-size="16.5" font-weight="normal" fill="#111111" textLength="128.93" lengthAdjust="spacingAndGlyphs" >RBSP-A/ect-hope</text>
<rect x="704" y="198" width="16.4" height="179.4" fill="url(#gCbar)" />
<line x1="720.6" y1="197.5" x2="720.6" y2="378" stroke="#000" stroke-width="1.3" />
<line x1="720.6" y1="377.2" x2="732" y2="377.2" stroke="#000" stroke-width="1.3" />
<line x1="720.6" y1="363.88" x2="726" y2="363.88" stroke="#000" stroke-width="1.3" />
<line x1="720.6" y1="350.56" x2="732" y2="350.56" stroke="#000" stroke-width="1.3" />
<line x1="720.6" y1="337.24" x2="726" y2="337.24" stroke="#000" stroke-width="1.3" />
<line x1="720.6" y1="323.91999999999996" x2="732" y2="323.91999999999996" stroke="#000" stroke-width="1.3" />
<line x1="720.6" y1="310.6" x2="726" y2="310.6" stroke="#000" stroke-width="1.3" />
<line x1="720.6" y1="297.28" x2="732" y2="297.28" stroke="#000" stroke-width="1.3" />
<line x1="720.6" y1="283.96" x2="726" y2="283.96" stroke="#000" stroke-width="1.3" />
<line x1="720.6" y1="270.64" x2="732" y2="270.64" stroke="#000" stroke-width="1.3" />
<line x1="720.6" y1="257.32" x2="726" y2="257.32" stroke="#000" stroke-width="1.3" />
<line x1="720.6" y1="244.0" x2="732" y2="244.0" stroke="#000" stroke-width="1.3" />
<line x1="720.6" y1="230.67999999999998" x2="726" y2="230.67999999999998" stroke="#000" stroke-width="1.3" />
<line x1="720.6" y1="217.35999999999999" x2="732" y2="217.35999999999999" stroke="#000" stroke-width="1.3" />
<line x1="720.6" y1="204.04" x2="726" y2="204.04" stroke="#000" stroke-width="1.3" />
<text x="736.61" y="387" font-size="16.5" font-weight="normal" fill="#111111" textLength="19.07" lengthAdjust="spacingAndGlyphs" >10</text>
<text x="756.09" y="379" font-size="16.5" font-weight="normal" fill="#111111" textLength="26.02" lengthAdjust="spacingAndGlyphs" >-22</text>
<text x="736.61" y="360" font-size="16.5" font-weight="normal" fill="#111111" textLength="19.07" lengthAdjust="spacingAndGlyphs" >10</text>
<text x="756.10" y="352" font-size="16.5" font-weight="normal" fill="#111111" textLength="25.78" lengthAdjust="spacingAndGlyphs" >-20</text>
<text x="736.61" y="334" font-size="16.5" font-weight="normal" fill="#111111" textLength="19.07" lengthAdjust="spacingAndGlyphs" >10</text>
<text x="756.09" y="326" font-size="16.5" font-weight="normal" fill="#111111" textLength="25.87" lengthAdjust="spacingAndGlyphs" >-18</text>
<text x="736.61" y="307" font-size="16.5" font-weight="normal" fill="#111111" textLength="19.07" lengthAdjust="spacingAndGlyphs" >10</text>
<text x="756.09" y="299" font-size="16.5" font-weight="normal" fill="#111111" textLength="25.87" lengthAdjust="spacingAndGlyphs" >-16</text>
<text x="736.61" y="280" font-size="16.5" font-weight="normal" fill="#111111" textLength="19.07" lengthAdjust="spacingAndGlyphs" >10</text>
<text x="756.10" y="272" font-size="16.5" font-weight="normal" fill="#111111" textLength="25.59" lengthAdjust="spacingAndGlyphs" >-14</text>
<text x="736.61" y="254" font-size="16.5" font-weight="normal" fill="#111111" textLength="19.07" lengthAdjust="spacingAndGlyphs" >10</text>
<text x="756.09" y="246" font-size="16.5" font-weight="normal" fill="#111111" textLength="26.02" lengthAdjust="spacingAndGlyphs" >-12</text>
<text x="736.61" y="227" font-size="16.5" font-weight="normal" fill="#111111" textLength="19.07" lengthAdjust="spacingAndGlyphs" >10</text>
<text x="756.10" y="219" font-size="16.5" font-weight="normal" fill="#111111" textLength="25.78" lengthAdjust="spacingAndGlyphs" >-10</text>
<text transform="rotate(-90)" x="-339.10" y="805" font-size="16.5" font-weight="normal" fill="#111" textLength="103.95" lengthAdjust="spacingAndGlyphs">V^2/m^2/Hz</text>
<rect x="219.6" y="440.6" width="468.6" height="180.6" fill="none" stroke="#000" stroke-width="1.3"/>
<line x1="214" y1="620.5" x2="219.6" y2="620.5" stroke="#000" stroke-width="1.3" />
<line x1="208" y1="599.5" x2="219.6" y2="599.5" stroke="#000" stroke-width="1.3" />
<text x="177.51" y="605" font-size="16.5" font-weight="normal" fill="#111111" textLength="24.89" lengthAdjust="spacingAndGlyphs" >1.2</text>
<line x1="214" y1="580.5" x2="219.6" y2="580.5" stroke="#000" stroke-width="1.3" />
<line x1="208" y1="562.5" x2="219.6" y2="562.5" stroke="#000" stroke-width="1.3" />
<text x="177.11" y="568" font-size="16.5" font-weight="normal" fill="#111111" textLength="24.89" lengthAdjust="spacingAndGlyphs" >1.4</text>
<line x1="214" y1="545.5" x2="219.6" y2="545.5" stroke="#000" stroke-width="1.3" />
<line x1="208" y1="529.5" x2="219.6" y2="529.5" stroke="#000" stroke-width="1.3" />
<text x="177.38" y="535" font-size="16.5" font-weight="normal" fill="#111111" textLength="24.89" lengthAdjust="spacingAndGlyphs" >1.6</text>
<line x1="214" y1="514.5" x2="219.6" y2="514.5" stroke="#000" stroke-width="1.3" />
<line x1="208" y1="500.5" x2="219.6" y2="500.5" stroke="#000" stroke-width="1.3" />
<text x="177.38" y="506" font-size="16.5" font-weight="normal" fill="#111111" textLength="24.89" lengthAdjust="spacingAndGlyphs" >1.8</text>
<line x1="214" y1="487.5" x2="219.6" y2="487.5" stroke="#000" stroke-width="1.3" />
<line x1="208" y1="474.5" x2="219.6" y2="474.5" stroke="#000" stroke-width="1.3" />
<text x="177.29" y="480" font-size="16.5" font-weight="normal" fill="#111111" textLength="24.89" lengthAdjust="spacingAndGlyphs" >2.0</text>
<line x1="214" y1="462.5" x2="219.6" y2="462.5" stroke="#000" stroke-width="1.3" />
<line x1="208" y1="451.5" x2="219.6" y2="451.5" stroke="#000" stroke-width="1.3" />
<text x="177.51" y="457" font-size="16.5" font-weight="normal" fill="#111111" textLength="24.89" lengthAdjust="spacingAndGlyphs" >2.2</text>
<line x1="214" y1="440.5" x2="219.6" y2="440.5" stroke="#000" stroke-width="1.3" />
<text transform="rotate(-90)" x="-580.93" y="166.2" font-size="16.5" font-weight="normal" fill="#111" textLength="98.48" lengthAdjust="spacingAndGlyphs">e Tperp/Tpar</text>
<line x1="220.5" y1="621.5" x2="220.5" y2="626.5" stroke="#000" stroke-width="1.3" />
<line x1="238.5" y1="621.5" x2="238.5" y2="632" stroke="#000" stroke-width="1.3" />
<line x1="256.5" y1="621.5" x2="256.5" y2="626.5" stroke="#000" stroke-width="1.3" />
<line x1="274.5" y1="621.5" x2="274.5" y2="626.5" stroke="#000" stroke-width="1.3" />
<line x1="292.5" y1="621.5" x2="292.5" y2="626.5" stroke="#000" stroke-width="1.3" />
<line x1="310.5" y1="621.5" x2="310.5" y2="626.5" stroke="#000" stroke-width="1.3" />
<line x1="328.5" y1="621.5" x2="328.5" y2="626.5" stroke="#000" stroke-width="1.3" />
<line x1="346.5" y1="621.5" x2="346.5" y2="626.5" stroke="#000" stroke-width="1.3" />
<line x1="364.5" y1="621.5" x2="364.5" y2="626.5" stroke="#000" stroke-width="1.3" />
<line x1="382.5" y1="621.5" x2="382.5" y2="626.5" stroke="#000" stroke-width="1.3" />
<line x1="400.5" y1="621.5" x2="400.5" y2="626.5" stroke="#000" stroke-width="1.3" />
<line x1="418.5" y1="621.5" x2="418.5" y2="626.5" stroke="#000" stroke-width="1.3" />
<line x1="436.5" y1="621.5" x2="436.5" y2="626.5" stroke="#000" stroke-width="1.3" />
<line x1="454.5" y1="621.5" x2="454.5" y2="632" stroke="#000" stroke-width="1.3" />
<line x1="472.5" y1="621.5" x2="472.5" y2="626.5" stroke="#000" stroke-width="1.3" />
<line x1="490.5" y1="621.5" x2="490.5" y2="626.5" stroke="#000" stroke-width="1.3" />
<line x1="508.5" y1="621.5" x2="508.5" y2="626.5" stroke="#000" stroke-width="1.3" />
<line x1="526.5" y1="621.5" x2="526.5" y2="626.5" stroke="#000" stroke-width="1.3" />
<line x1="544.5" y1="621.5" x2="544.5" y2="626.5" stroke="#000" stroke-width="1.3" />
<line x1="562.5" y1="621.5" x2="562.5" y2="626.5" stroke="#000" stroke-width="1.3" />
<line x1="580.5" y1="621.5" x2="580.5" y2="626.5" stroke="#000" stroke-width="1.3" />
<line x1="598.5" y1="621.5" x2="598.5" y2="626.5" stroke="#000" stroke-width="1.3" />
<line x1="616.5" y1="621.5" x2="616.5" y2="626.5" stroke="#000" stroke-width="1.3" />
<line x1="634.5" y1="621.5" x2="634.5" y2="626.5" stroke="#000" stroke-width="1.3" />
<line x1="652.5" y1="621.5" x2="652.5" y2="626.5" stroke="#000" stroke-width="1.3" />
<line x1="670.5" y1="621.5" x2="670.5" y2="632" stroke="#000" stroke-width="1.3" />
<line x1="688.5" y1="621.5" x2="688.5" y2="626.5" stroke="#000" stroke-width="1.3" />
<path d="M237.90,499.3 L238.30,484.4 L238.70,502.4 L239.10,494.1 L239.50,506.3 L239.90,497.5 L240.30,502.3 L240.70,483.1 L241.10,515.1 L241.50,495.2 L241.90,505.8 L242.30,506.0 L242.70,524.4 L243.10,505.2 L243.50,520.2 L243.90,509.1 L244.30,523.2 L244.70,509.2 L245.10,530.2 L245.50,519.7 L245.90,528.6 L246.30,518.5 L246.70,535.6 L247.10,519.0 L247.50,529.4 L247.90,521.3 L248.30,541.3 L248.70,531.3 L249.10,541.9 L249.50,533.3 L249.90,545.4 L250.30,534.5 L250.70,538.5 L251.10,530.1 L251.50,544.1 L251.90,536.9 L252.30,541.5 L252.70,539.2 L253.10,543.6 L253.50,534.7 L253.90,545.5 L254.30,541.0 L254.70,550.2 L255.10,543.0 L255.50,546.9 L255.90,539.1 L256.30,548.6 L256.70,546.4 L257.10,552.6 L257.50,550.1 L257.90,562.4 L258.30,555.0 L258.70,561.9 L259.10,554.5 L259.50,562.2 L259.90,555.1 L260.30,561.6 L260.70,554.0 L261.10,562.9 L261.50,559.0 L261.90,561.5 L262.30,557.1 L262.70,563.6 L263.10,557.4 L263.50,559.7 L263.90,554.5 L264.30,563.4 L264.70,552.1 L265.10,558.7 L265.50,554.9 L265.90,561.1 L266.30,555.8 L266.70,563.8 L267.10,555.4 L267.50,567.1 L267.90,557.0 L268.30,569.4 L268.70,557.1 L269.10,568.6 L269.50,563.9 L269.90,567.4 L270.30,562.8 L270.70,572.1 L271.10,563.6 L271.50,571.2 L271.90,564.2 L272.30,572.6 L272.70,565.4 L273.10,574.7 L273.50,567.8 L273.90,572.7 L274.30,566.9 L274.70,577.4 L275.10,569.2 L275.50,576.7 L275.90,573.1 L276.30,574.3 L276.70,570.6 L277.10,578.9 L277.50,569.9 L277.90,582.0 L278.30,569.5 L278.70,576.2 L279.10,569.5 L279.50,581.4 L279.90,569.5 L280.30,578.8 L280.70,567.8 L281.10,578.8 L281.50,571.9 L281.90,579.5 L282.30,567.7 L282.70,582.3 L283.10,572.6 L283.50,577.3 L283.90,570.3 L284.30,578.8 L284.70,566.9 L285.10,578.2 L285.50,573.2 L285.90,574.3 L286.30,568.2 L286.70,582.2 L287.10,561.5 L287.50,575.8 L287.90,572.3 L288.30,577.3 L288.70,566.8 L289.10,580.8 L289.50,570.4 L289.90,583.5 L290.30,566.3 L290.70,576.2 L291.10,566.5 L291.50,579.4 L291.90,569.1 L292.30,582.0 L292.70,564.8 L293.10,575.5 L293.50,567.3 L293.90,578.3 L294.30,565.3 L294.70,583.4 L295.10,566.5 L295.50,580.3 L295.90,563.9 L296.30,573.2 L296.70,558.2 L297.10,574.5 L297.50,562.0 L297.90,575.7 L298.30,562.6 L298.70,570.6 L299.10,545.2 L299.50,562.7 L299.90,557.7 L300.30,569.5 L300.70,556.5 L301.10,567.1 L301.50,549.0 L301.90,563.0 L302.30,554.2 L302.70,561.6 L303.10,545.7 L303.50,559.8 L303.90,545.9 L304.30,556.7 L304.70,541.4 L305.10,559.8 L305.50,544.6 L305.90,553.1 L306.30,544.6 L306.70,550.5 L307.10,544.3 L307.50,557.2 L307.90,544.3 L308.30,550.1 L308.70,545.0 L309.10,558.5 L309.50,546.3 L309.90,556.9 L310.30,544.6 L310.70,558.0 L311.10,548.6 L311.50,558.1 L311.90,556.6 L312.30,561.2 L312.70,554.7 L313.10,566.7 L313.50,550.7 L313.90,566.8 L314.30,556.8 L314.70,567.1 L315.10,554.2 L315.50,564.2 L315.90,551.5 L316.30,570.5 L316.70,551.2 L317.10,564.1 L317.50,546.8 L317.90,562.0 L318.30,543.7 L318.70,565.9 L319.10,550.3 L319.50,559.5 L319.90,548.2 L320.30,553.2 L320.70,544.9 L321.10,555.7 L321.50,536.3 L321.90,551.2 L322.30,534.4 L322.70,544.1 L323.10,534.1 L323.50,547.8 L323.90,527.5 L324.30,533.9 L324.70,527.3 L325.10,537.6 L325.50,525.3 L325.90,533.0 L326.30,516.8 L326.70,525.6 L327.10,516.2 L327.50,518.3 L327.90,511.1 L328.30,517.7 L328.70,511.7 L329.10,516.0 L329.50,514.2 L329.90,520.0 L330.30,508.0 L330.70,517.7 L331.10,509.7 L331.50,520.6 L331.90,506.3 L332.30,520.1 L332.70,504.9 L333.10,516.8 L333.50,492.9 L333.90,506.8 L334.30,494.9 L334.70,513.2 L335.10,477.6 L335.50,494.4 L335.90,475.2 L336.30,499.3 L336.70,476.2 L337.10,501.5 L337.50,472.7 L337.90,503.6 L338.30,471.9 L338.70,491.5 L339.10,481.0 L339.50,488.0 L339.90,473.0 L340.30,495.6 L340.70,478.7 L341.10,498.6 L341.50,487.5 L341.90,510.7 L342.30,486.6 L342.70,493.2 L343.10,479.0 L343.50,503.9 L343.90,479.0 L344.30,495.7 L344.70,475.9 L345.10,494.0 L345.50,467.3 L345.90,488.4 L346.30,471.7 L346.70,503.8 L347.10,484.2 L347.50,504.7 L347.90,466.4 L348.30,497.0 L348.70,480.2 L349.10,505.9 L349.50,477.8 L349.90,505.0 L350.30,486.6 L350.70,500.2 L351.10,489.8 L351.50,495.5 L351.90,480.9 L352.30,501.5 L352.70,488.9 L353.10,511.5 L353.50,484.4 L353.90,511.3 L354.30,489.0 L354.70,524.2 L355.10,504.8 L355.50,528.6 L355.90,501.8 L356.30,525.9 L356.70,502.1 L357.10,547.3 L357.50,521.7 L357.90,545.3 L358.30,522.8 L358.70,540.2 L359.10,531.6 L359.50,556.0 L359.90,549.8 L360.30,571.3 L360.70,564.2 M373.00,551.3 L373.40,531.5 L373.80,526.3 L374.20,502.6 L374.60,504.6 L375.00,482.7 L375.40,497.3 L375.80,481.7 L376.20,490.2 L376.60,486.9 L377.00,496.8 L377.40,479.8 L377.80,499.9 L378.20,486.0 L378.60,491.8 L379.00,480.3 L379.40,495.5 L379.80,485.2 L380.20,496.3 L380.60,479.4 L381.00,501.6 L381.40,475.7 L381.80,499.1 L382.20,481.5 L382.60,499.3 L383.00,481.0 L383.40,491.2 L383.80,477.6 L384.20,487.6 L384.60,471.9 L385.00,494.7 L385.40,479.1 L385.80,494.1 L386.20,481.0 L386.60,489.2 L387.00,468.2 L387.40,491.1 L387.80,472.1 L388.20,481.2 L388.60,469.3 L389.00,480.3 L389.40,476.0 L389.80,489.6 L390.20,477.2 L390.60,492.2 L391.00,476.6 L391.40,503.1 L391.80,476.8 L392.20,504.0 L392.60,471.1 L393.00,510.5 L393.40,473.2 L393.80,512.0 L394.20,469.4 L394.60,498.0 L395.00,468.8 L395.40,488.5 L395.80,466.3 L396.20,481.3 L396.60,472.1 L397.00,480.9 L397.40,475.1 L397.80,479.0 L398.20,467.0 L398.60,478.8 L399.00,469.9 L399.40,479.0 L399.80,476.2 L400.20,484.4 L400.60,474.1 L401.00,486.5 L401.40,481.8 L401.80,490.7 L402.20,477.5 L402.60,492.8 L403.00,479.4 L403.40,498.7 L403.80,486.5 L404.20,495.4 L404.60,485.4 L405.00,501.4 L405.40,490.4 L405.80,502.1 L406.20,493.6 L406.60,498.6 L407.00,485.1 L407.40,495.6 L407.80,488.6 L408.20,502.2 L408.60,485.0 L409.00,495.8 L409.40,489.3 L409.80,489.9 L410.20,478.8 L410.60,487.9 L411.00,476.5 L411.40,489.2 L411.80,470.7 L412.20,489.5 L412.60,470.4 L413.00,490.3 L413.40,471.3 L413.80,487.6 L414.20,479.1 L414.60,486.0 L415.00,481.1 L415.40,488.4 L415.80,479.0 L416.20,485.5 L416.60,479.1 L417.00,493.0 L417.40,485.1 L417.80,493.2 L418.20,480.7 L418.60,487.6 L419.00,480.1 L419.40,495.2 L419.80,485.1 L420.20,493.7 L420.60,486.3 L421.00,494.6 L421.40,484.7 L421.80,501.9 L422.20,486.1 L422.60,502.3 L423.00,492.9 L423.40,502.4 L423.80,493.6 L424.20,505.0 L424.60,495.8 L425.00,500.1 L425.40,493.7 L425.80,508.3 L426.20,493.8 L426.60,508.3 L427.00,496.2 L427.40,513.6 L427.80,494.4 L428.20,511.1 L428.60,491.3 L429.00,508.2 L429.40,502.1 L429.80,509.9 L430.20,495.0 L430.60,506.2 L431.00,494.4 L431.40,508.3 L431.80,501.7 L432.20,514.0 L432.60,496.0 L433.00,506.7 L433.40,496.8 L433.80,505.3 L434.20,497.2 L434.60,508.1 L435.00,499.3 L435.40,505.9 L435.80,501.8 L436.20,510.8 L436.60,497.1 L437.00,514.7 L437.40,494.5 L437.80,506.5 L438.20,500.0 L438.60,508.3 L439.00,493.9 L439.40,512.3 L439.80,503.8 L440.20,517.4 L440.60,495.5 L441.00,514.0 L441.40,498.3 L441.80,517.6 L442.20,496.7 L442.60,508.6 L443.00,499.7 L443.40,506.2 L443.80,497.2 L444.20,502.3 L444.60,498.8 L445.00,507.7 L445.40,495.2 L445.80,507.3 L446.20,491.7 L446.60,508.6 L447.00,490.7 L447.40,504.4 L447.80,490.6 L448.20,505.9 L448.60,491.0 L449.00,501.5 L449.40,491.3 L449.80,507.9 L450.20,497.2 L450.60,502.8 L451.00,496.1 L451.40,507.3 L451.80,494.1 L452.20,506.1 L452.60,497.5 L453.00,503.1 L453.40,489.6 L453.80,510.1 L454.20,488.9 L454.60,507.0 L455.00,485.6 L455.40,505.6 L455.80,487.2 L456.20,493.5 L456.60,487.8 L457.00,492.8 L457.40,479.7 L457.80,494.9 L458.20,469.8 L458.60,492.3 L459.00,473.9 L459.40,492.4 L459.80,481.5 L460.20,499.8 L460.60,477.6 L461.00,497.5 L461.40,479.7 L461.80,496.5 L462.20,490.6 L462.60,496.6 L463.00,486.5 L463.40,510.1 L463.80,489.2 L464.20,510.4 L464.60,495.1 L465.00,507.1 L465.40,495.1 L465.80,509.2 L466.20,498.6 L466.60,514.3 L467.00,499.5 L467.40,515.2 L467.80,502.3 L468.20,518.4 L468.60,513.3 L469.00,521.3 L469.40,500.0 L469.80,520.4 L470.20,505.7 L470.60,521.2 L471.00,512.5 L471.40,525.4 L471.80,504.9 L472.20,518.6 L472.60,505.0 L473.00,528.6 L473.40,509.7 L473.80,522.6 L474.20,499.6 L474.60,518.4 L475.00,493.8 L475.40,515.9 L475.80,500.9 L476.20,507.5 L476.60,496.7 L477.00,514.7 L477.40,486.1 L477.80,509.8 L478.20,489.8 L478.60,501.6 L479.00,488.5 L479.40,514.4 L479.80,481.8 L480.20,508.2 L480.60,495.8 L481.00,502.5 L481.40,492.1 L481.80,511.9 L482.20,499.0 L482.60,505.1 L483.00,495.7 L483.40,513.7 L483.80,507.8 L484.20,516.6 L484.60,510.1 L485.00,533.0 L485.40,516.4 L485.80,529.9 L486.20,495.6 L486.60,542.9 L487.00,521.9 L487.40,556.0 L487.80,508.2 L488.20,542.3 L488.60,516.6 L489.00,529.3 L489.40,506.7 L489.80,532.3 L490.20,508.7 L490.60,534.8 L491.00,510.3 L491.40,542.1 L491.80,516.2 L492.20,532.6 L492.60,505.7 L493.00,533.4 L493.40,492.4 L493.80,520.7 L494.20,499.2 L494.60,513.4 L495.00,500.6 L495.40,508.9 L495.80,496.9 L496.20,508.5 L496.60,480.8 L497.00,514.2 L497.40,487.9 L497.80,507.8 L498.20,474.2 L498.60,497.3 L499.00,475.6 L499.40,497.1 L499.80,488.0 L500.20,498.7 L500.60,479.9 L501.00,492.7 L501.40,485.2 L501.80,505.7 L502.20,480.7 L502.60,494.1 L503.00,477.8 L503.40,508.9 L503.80,486.4 L504.20,496.0 L504.60,489.1 L505.00,502.8 L505.40,490.3 L505.80,503.2 L506.20,487.9 L506.60,497.2 L507.00,488.1 L507.40,509.4 L507.80,485.2 L508.20,505.0 L508.60,483.8 L509.00,496.2 L509.40,483.5 L509.80,503.3 L510.20,483.6 L510.60,498.7 L511.00,492.6 L511.40,500.9 L511.80,492.3 L512.20,505.3 L512.60,497.0 L513.00,506.4 L513.40,497.3 L513.80,508.3 L514.20,495.3 L514.60,526.5 L515.00,502.8 L515.40,519.0 L515.80,503.1 L516.20,523.4 L516.60,492.7 L517.00,534.0 L517.40,509.8 L517.80,523.8 L518.20,503.6 L518.60,531.0 L519.00,497.5 L519.40,540.5 L519.80,516.2 L520.20,539.5 L520.60,522.3 L521.00,556.8 L521.40,541.3 L521.80,555.5 L522.20,556.4 M534.20,574.9 L534.60,562.3 L535.00,568.4 L535.40,555.0 L535.80,562.9 L536.20,535.7 L536.60,547.5 L537.00,513.0 L537.40,521.7 L537.80,498.8 L538.20,531.5 L538.60,506.8 L539.00,522.1 L539.40,500.1 L539.80,525.6 L540.20,500.8 L540.60,515.8 L541.00,492.2 L541.40,506.5 L541.80,498.8 L542.20,505.2 L542.60,480.4 L543.00,503.8 L543.40,475.0 L543.80,503.5 L544.20,473.1 L544.60,511.7 L545.00,472.6 L545.40,501.4 L545.80,469.7 L546.20,505.4 L546.60,472.2 L547.00,509.2 L547.40,484.7 L547.80,504.6 L548.20,459.9 L548.60,508.0 L549.00,482.9 L549.40,497.0 L549.80,477.9 L550.20,511.3 L550.60,467.9 L551.00,499.2 L551.40,484.5 L551.80,487.9 L552.20,480.4 L552.60,492.8 L553.00,481.4 L553.40,503.6 L553.80,488.6 L554.20,513.5 L554.60,498.5 L555.00,518.4 L555.40,514.9 L555.80,527.2 L556.20,517.5 L556.60,523.1 L557.00,519.2 L557.40,530.9 L557.80,515.2 L558.20,532.3 L558.60,525.4 L559.00,534.7 L559.40,525.3 L559.80,546.9 L560.20,517.6 L560.60,542.0 L561.00,527.0 L561.40,547.4 L561.80,526.0 L562.20,556.6 L562.60,522.8 L563.00,558.5 L563.40,523.4 L563.80,548.8 L564.20,538.2 L564.60,557.1 L565.00,551.4 L565.40,581.7 L565.80,538.8 L566.20,577.8 L566.60,543.4 L567.00,584.9 L567.40,564.1 L567.80,580.7 L568.20,563.0 L568.60,573.0 L569.00,566.5 L569.40,584.0 L569.80,558.4 L570.20,590.9 L570.60,571.4 L571.00,587.2 L571.40,573.4 L571.80,587.2 L572.20,573.1 L572.60,587.8 L573.00,580.2 L573.40,604.9 L573.80,575.9 L574.20,594.4 L574.60,579.6 L575.00,591.2 L575.40,581.7 L575.80,593.2 L576.20,579.8 L576.60,597.6 L577.00,579.1 L577.40,601.2 L577.80,581.0 L578.20,602.0 L578.60,574.3 L579.00,597.4 L579.40,575.5 L579.80,600.4 L580.20,577.9 L580.60,589.7 L581.00,576.2 L581.40,598.2 L581.80,581.1 L582.20,597.5 L582.60,570.1 L583.00,595.8 L583.40,580.1 L583.80,592.1 L584.20,576.3 L584.60,594.5 L585.00,576.2 L585.40,601.2 L585.80,576.0 L586.20,593.6 L586.60,579.7 L587.00,601.1 L587.40,581.2 L587.80,590.9 L588.20,578.7 L588.60,601.2 L589.00,580.7 L589.40,593.2 L589.80,579.2 L590.20,598.4 L590.60,581.1 L591.00,601.6 L591.40,577.4 L591.80,603.1 L592.20,586.5 L592.60,607.7 L593.00,577.5 L593.40,593.9 L593.80,584.6 L594.20,602.2 L594.60,590.7 L595.00,597.2 L595.40,580.0 L595.80,598.0 L596.20,576.9 L596.60,600.8 L597.00,589.9 L597.40,606.9 L597.80,593.3 L598.20,604.8 L598.60,594.5 L599.00,606.9 L599.40,592.2 L599.80,606.7 L600.20,588.6 L600.60,601.7 L601.00,584.0 L601.40,605.7 L601.80,585.2 L602.20,605.9 L602.60,581.0 L603.00,600.3 L603.40,578.0 L603.80,602.3 L604.20,582.1 L604.60,595.5 L605.00,579.1 L605.40,589.4 L605.80,582.3 L606.20,600.2 L606.60,575.9 L607.00,590.3 L607.40,582.5 L607.80,589.3 L608.20,578.3 L608.60,595.8 L609.00,574.5 L609.40,595.2 L609.80,576.1 L610.20,592.8 L610.60,576.1 L611.00,599.9 L611.40,574.2 L611.80,589.0 L612.20,571.5 L612.60,594.5 L613.00,567.7 L613.40,592.6 L613.80,570.7 L614.20,582.2 L614.60,574.1 L615.00,584.4 L615.40,576.5 L615.80,582.9 L616.20,569.6 L616.60,583.0 L617.00,570.7 L617.40,583.9 L617.80,569.0 L618.20,580.9 L618.60,577.6 L619.00,589.3 L619.40,576.4 L619.80,583.8 L620.20,574.0 L620.60,580.0 L621.00,572.9 L621.40,576.7 L621.80,567.6 L622.20,582.3 L622.60,567.8 L623.00,575.6 L623.40,565.7 L623.80,580.3 L624.20,562.5 L624.60,579.9 L625.00,565.5 L625.40,577.8 L625.80,558.6 L626.20,576.2 L626.60,560.0 L627.00,577.0 L627.40,562.2 L627.80,572.4 L628.20,563.7 L628.60,565.3 L629.00,561.4 L629.40,566.8 L629.80,554.3 L630.20,571.4 L630.60,554.2 L631.00,565.0 L631.40,550.4 L631.80,563.4 L632.20,551.3 L632.60,562.2 L633.00,554.3 L633.40,555.4 L633.80,546.1 L634.20,555.3 L634.60,545.7 L635.00,555.9 L635.40,539.6 L635.80,547.6 L636.20,531.7 L636.60,555.9 L637.00,536.5 L637.40,547.1 L637.80,534.3 L638.20,546.9 L638.60,530.5 L639.00,539.9 L639.40,536.7 L639.80,550.4 L640.20,539.5 L640.60,560.4 L641.00,535.5 L641.40,561.7 L641.80,541.4 L642.20,573.8 L642.60,535.4 L643.00,578.2 L643.40,533.8 L643.80,582.6 L644.20,565.7 L644.60,576.9 L645.00,546.2 L645.40,569.9 L645.80,556.9 L646.20,577.5 L646.60,558.0 L647.00,577.0 L647.40,566.8 L647.80,587.0 L648.20,557.8 L648.60,574.1 L649.00,551.8 L649.40,588.8 L649.80,561.0 L650.20,587.0 L650.60,553.5 L651.00,571.5 L651.40,561.8 L651.80,587.4 L652.20,556.7 L652.60,584.7 L653.00,556.1 L653.40,581.3 L653.80,562.5 L654.20,577.1 L654.60,559.7 L655.00,579.9 L655.40,560.0 L655.80,576.6 L656.20,557.9 L656.60,570.2 L657.00,548.2 L657.40,568.8 L657.80,543.6 L658.20,575.7 L658.60,544.3 L659.00,578.7 L659.40,544.7 L659.80,562.3 L660.20,550.5 L660.60,584.5 L661.00,536.7 L661.40,559.2 L661.80,526.3 L662.20,565.2 L662.60,526.4 L663.00,549.0 L663.40,526.6 L663.80,556.9 L664.20,518.3 L664.60,551.8 L665.00,514.5 L665.40,540.5 L665.80,514.7 L666.20,553.9 L666.60,518.8 L667.00,529.9 L667.40,509.4 L667.80,525.6 L668.20,504.1 L668.60,517.9 L669.00,493.4 L669.40,520.5 M328.8,510.8 L329.3,487.0 L329.8,510.8 M334.7,473.0 L335.2,459.7 L335.7,473.0 M388.8,468.5 L389.3,449.0 L389.8,468.5 M395.6,464.6 L396.1,445.0 L396.6,464.6 M510.0,482.0 L510.5,457.7 L511.0,482.0 M638.5,529.5 L639.0,513.7 L639.5,529.5 M548.7,468.0 L549.2,461.6 L549.7,468.0 " fill="none" stroke="#000" stroke-width="1.15" stroke-linejoin="bevel"/>
<text x="216.19" y="653" font-size="16.5" font-weight="normal" fill="#111111" textLength="44.48" lengthAdjust="spacingAndGlyphs" >00:00</text>
<text x="432.06" y="653" font-size="16.5" font-weight="normal" fill="#111111" textLength="44.82" lengthAdjust="spacingAndGlyphs" >12:00</text>
<text x="647.88" y="653" font-size="16.5" font-weight="normal" fill="#111111" textLength="44.99" lengthAdjust="spacingAndGlyphs" >00:00</text>
<text x="216.50" y="673" font-size="16.5" font-weight="normal" fill="#111111" textLength="44.20" lengthAdjust="spacingAndGlyphs" >4.225</text>
<text x="431.98" y="673" font-size="16.5" font-weight="normal" fill="#111111" textLength="44.98" lengthAdjust="spacingAndGlyphs" >5.756</text>
<text x="647.92" y="673" font-size="16.5" font-weight="normal" fill="#111111" textLength="45.09" lengthAdjust="spacingAndGlyphs" >3.179</text>
<text x="200.20" y="693" font-size="16.5" font-weight="normal" fill="#111111" textLength="60.50" lengthAdjust="spacingAndGlyphs" >-10.580</text>
<text x="426.00" y="693" font-size="16.5" font-weight="normal" fill="#111111" textLength="50.71" lengthAdjust="spacingAndGlyphs" >-1.544</text>
<text x="631.89" y="693" font-size="16.5" font-weight="normal" fill="#111111" textLength="61.02" lengthAdjust="spacingAndGlyphs" >-16.190</text>
<text x="216.00" y="713" font-size="16.5" font-weight="normal" fill="#111111" textLength="44.89" lengthAdjust="spacingAndGlyphs" >2.247</text>
<text x="431.98" y="713" font-size="16.5" font-weight="normal" fill="#111111" textLength="44.98" lengthAdjust="spacingAndGlyphs" >5.398</text>
<text x="647.83" y="713" font-size="16.5" font-weight="normal" fill="#111111" textLength="45.09" lengthAdjust="spacingAndGlyphs" >8.125</text>
<text x="216.50" y="733" font-size="16.5" font-weight="normal" fill="#111111" textLength="44.25" lengthAdjust="spacingAndGlyphs" >4.373</text>
<text x="431.98" y="733" font-size="16.5" font-weight="normal" fill="#111111" textLength="44.89" lengthAdjust="spacingAndGlyphs" >5.760</text>
<text x="647.92" y="733" font-size="16.5" font-weight="normal" fill="#111111" textLength="45.18" lengthAdjust="spacingAndGlyphs" >3.447</text>
<text x="156.45" y="673" font-size="16.5" font-weight="normal" fill="#111111" textLength="11.82" lengthAdjust="spacingAndGlyphs" >R</text>
<text x="167.91" y="678" font-size="9.5" font-weight="bold" fill="#111111" textLength="6.79" lengthAdjust="spacingAndGlyphs" >E</text>
<text x="137.54" y="693" font-size="16.5" font-weight="normal" fill="#111111" textLength="36.70" lengthAdjust="spacingAndGlyphs" >MLat</text>
<text x="143.45" y="713" font-size="16.5" font-weight="normal" fill="#111111" textLength="31.43" lengthAdjust="spacingAndGlyphs" >MLT</text>
<text x="165.57" y="733" font-size="16.5" font-weight="normal" fill="#111111" textLength="8.97" lengthAdjust="spacingAndGlyphs" >L</text>
<text x="251.40" y="757" font-size="16.5" font-weight="normal" fill="#111111" textLength="404.30" lengthAdjust="spacingAndGlyphs" >2012-12-01 (336) 23:00 to 2012-12-03 (338) 01:00</text>
</g>
<rect x="388.5" y="59.5" width="278" height="366" fill="#eeeeee" stroke="#6d8ac9" stroke-width="1"/>
<rect x="389" y="60" width="277" height="1" fill="#ffffff" />
<rect x="389" y="60" width="1" height="365" fill="#ffffff" />
<rect x="389" y="81" width="277" height="1" fill="#6d8ac9" />
<rect x="389" y="82" width="277" height="1" fill="#ffffff" />
<rect x="389" y="141" width="277" height="1" fill="#6d8ac9" />
<rect x="389" y="142" width="277" height="1" fill="#ffffff" />
<rect x="389" y="182" width="277" height="1" fill="#6d8ac9" />
<rect x="389" y="183" width="277" height="1" fill="#ffffff" />
<rect x="389" y="262" width="277" height="1" fill="#6d8ac9" />
<rect x="389" y="263" width="277" height="1" fill="#ffffff" />
<rect x="389" y="305" width="277" height="1" fill="#6d8ac9" />
<rect x="389" y="306" width="277" height="1" fill="#ffffff" />
<rect x="389" y="327" width="277" height="1" fill="#6d8ac9" />
<rect x="389" y="328" width="277" height="1" fill="#ffffff" />
<text x="415.03" y="76" font-size="12.5" font-weight="bold" fill="#2b2b2b" textLength="42.86" lengthAdjust="spacingAndGlyphs" >Cache</text>
<text x="414.60" y="97" font-size="12.5" font-weight="bold" fill="#2b2b2b" textLength="121.60" lengthAdjust="spacingAndGlyphs" >PNG Walk Viewer</text>
<text x="415.00" y="116" font-size="12.5" font-weight="bold" fill="#2b2b2b" textLength="134.33" lengthAdjust="spacingAndGlyphs" >Create PNG Walk...</text>
<text x="414.61" y="135" font-size="12.5" font-weight="bold" fill="#2b2b2b" textLength="85.60" lengthAdjust="spacingAndGlyphs" >Run Batch...</text>
<text x="414.63" y="158" font-size="12.5" font-weight="bold" fill="#2b2b2b" textLength="76.75" lengthAdjust="spacingAndGlyphs" >Events List</text>
<text x="414.63" y="177" font-size="12.5" font-weight="bold" fill="#2b2b2b" textLength="71.86" lengthAdjust="spacingAndGlyphs" >Fix Layout</text>
<text x="415.21" y="198" font-size="12.5" font-weight="bold" fill="#2b2b2b" textLength="89.05" lengthAdjust="spacingAndGlyphs" >Aggregate...</text>
<text x="414.59" y="217" font-size="12.5" font-weight="bold" fill="#2b2b2b" textLength="99.51" lengthAdjust="spacingAndGlyphs" >Replace File...</text>
<text x="414.55" y="236" font-size="12.5" font-weight="bold" fill="#2b2b2b" textLength="90.39" lengthAdjust="spacingAndGlyphs" >Mash Data...</text>
<text x="415.22" y="256" font-size="12.5" font-weight="bold" fill="#2b2b2b" textLength="170.32" lengthAdjust="spacingAndGlyphs" >Additional Operations...</text>
<text x="414.65" y="278" font-size="12.5" font-weight="bold" fill="#2b2b2b" textLength="83.98" lengthAdjust="spacingAndGlyphs" >Decode URL</text>
<text x="414.60" y="298" font-size="12.5" font-weight="bold" fill="#2b2b2b" textLength="107.90" lengthAdjust="spacingAndGlyphs" >Reload All Data</text>
<text x="414.58" y="322" font-size="12.5" font-weight="bold" fill="#2b2b2b" textLength="202.15" lengthAdjust="spacingAndGlyphs" >Manage and Browse Tools...</text>
<text x="415.00" y="343" font-size="12.5" font-weight="bold" fill="#2b2b2b" textLength="137.50" lengthAdjust="spacingAndGlyphs" >Create Screen Shot</text>
<text x="415.16" y="362" font-size="12.5" font-weight="bold" fill="#2b2b2b" textLength="204.53" lengthAdjust="spacingAndGlyphs" >Start SAMP Hub and Listener</text>
<text x="415.08" y="381" font-size="12.5" font-weight="bold" fill="#2b2b2b" textLength="140.80" lengthAdjust="spacingAndGlyphs" >startScreenShots.jy</text>
<text x="414.66" y="400" font-size="12.5" font-weight="bold" fill="#2b2b2b" textLength="128.14" lengthAdjust="spacingAndGlyphs" >updateAutoplot.jy</text>
<text x="414.63" y="419" font-size="12.5" font-weight="bold" fill="#2b2b2b" textLength="77.58" lengthAdjust="spacingAndGlyphs" >realTime.jy</text>
<text x="625.47" y="176" font-size="9.5" font-weight="normal" fill="#6f86b8" textLength="26.37" lengthAdjust="spacingAndGlyphs" >Ctrl-F</text>
<text x="624.94" y="297" font-size="9.5" font-weight="normal" fill="#6f86b8" textLength="27.14" lengthAdjust="spacingAndGlyphs" >Ctrl-L</text>
<path d="M656.5,67 L660.5,71 L656.5,75 Z" fill="#1e1e1e"/>
<rect x="396" y="244.5" width="2.2" height="13" fill="#555555" />
<rect x="401" y="244.5" width="2" height="13" fill="#555555" />
<rect x="406" y="244.5" width="2.2" height="13" fill="#555555" />
<circle cx="404.3" cy="249.6" r="3.7" fill="#c0dcff" stroke="#8aa8cc" stroke-width="0.9"/>
<path d="M397.6,257.6 L401.8,252.8" stroke="#f29a20" stroke-width="2"/>
<defs><linearGradient id="gRel" x1="0" y1="0" x2="0.3" y2="1"><stop offset="0" stop-color="#8fbdec"/><stop offset="1" stop-color="#3f7fc6"/></linearGradient></defs>
<path d="M408.2,294.5 A5.6,5.6 0 1 1 405.5,288" fill="none" stroke="url(#gRel)" stroke-width="3.6"/>
<path d="M403,284.6 L410.8,284.8 L410,292.6 Z" fill="#6aa0d8"/>
<path d="M463,188.2 L486.6,203 L478.2,206.4 L489.2,224.6 L482.6,227.8 L471.6,210.8 L464.2,215.8 Z" fill="url(#gCursor)" stroke="#111" stroke-width="3" stroke-linejoin="round"/>
</svg></body></html>
